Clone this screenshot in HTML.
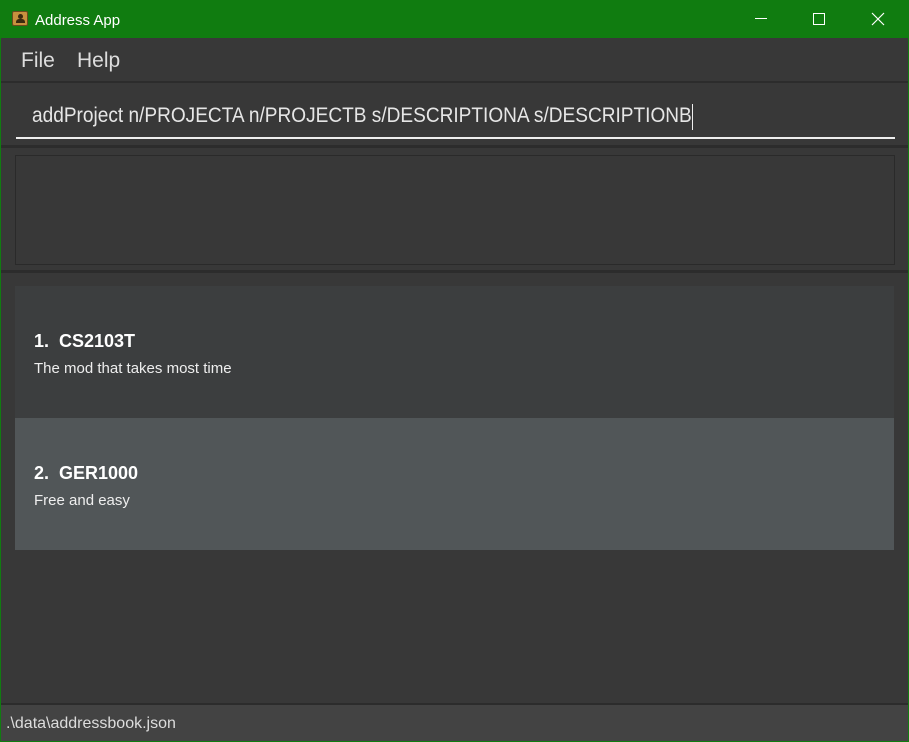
<!DOCTYPE html>
<html><head><style>
*{margin:0;padding:0;box-sizing:border-box}
body{width:909px;height:742px;background:#107c10;font-family:"Segoe UI","Liberation Sans",sans-serif;position:relative;overflow:hidden}
.abs{position:absolute}
</style></head><body>
<div class="abs" style="left:0;top:0;width:909px;height:38px;background:#107c10"></div>
<div class="abs" style="left:12px;top:11px;width:16px;height:15px;background:#c8913e;border:1px solid #6b4a1e;border-radius:2px"><div style="position:absolute;left:5px;top:2px;width:5px;height:5px;background:#3a2a10;border-radius:50%"></div><div style="position:absolute;left:3px;top:7px;width:9px;height:4px;background:#3a2a10;border-radius:3px 3px 0 0"></div></div>
<div class="abs" style="left:35px;top:12px;color:#fff;font-size:15px">Address App</div>
<div class="abs" style="left:755px;top:18px;width:12px;height:1px;background:#fff"></div>
<div class="abs" style="left:813px;top:13px;width:12px;height:12px;border:1px solid #fff"></div>
<svg class="abs" style="left:871px;top:12px" width="14" height="14"><path d="M1 1L13 13M13 1L1 13" stroke="#fff" stroke-width="1.2"/></svg>
<div class="abs" style="left:1px;top:38px;width:907px;height:703px;background:#383838"></div>
<div class="abs" style="left:21px;top:49px;color:#ddd;font-size:21px">File</div>
<div class="abs" style="left:77px;top:49px;color:#ddd;font-size:21px">Help</div>
<div class="abs" style="left:1px;top:81px;width:907px;height:2px;background:#2c2c2c"></div>
<div class="abs" style="left:32px;top:104px;color:#e6e6e6;font-size:21px;white-space:nowrap;transform:scaleX(0.908);transform-origin:0 0">addProject n/PROJECTA n/PROJECTB s/DESCRIPTIONA s/DESCRIPTIONB</div>
<div class="abs" style="left:692px;top:104px;width:1px;height:26px;background:#eee"></div>
<div class="abs" style="left:16px;top:137px;width:879px;height:2px;background:#eee"></div>
<div class="abs" style="left:1px;top:145px;width:907px;height:3px;background:#2c2c2c"></div>
<div class="abs" style="left:15px;top:155px;width:880px;height:110px;border:1px solid #2a2a2a"></div>
<div class="abs" style="left:1px;top:270px;width:907px;height:3px;background:#2c2c2c"></div>
<div class="abs" style="left:15px;top:286px;width:879px;height:132px;background:#3c3e3f"></div>
<div class="abs" style="left:34px;top:331px;color:#fff;font-size:18px;font-weight:bold">1.&nbsp; CS2103T</div>
<div class="abs" style="left:34px;top:360px;color:#eee;font-size:15px">The mod that takes most time</div>
<div class="abs" style="left:15px;top:418px;width:879px;height:132px;background:#515658"></div>
<div class="abs" style="left:34px;top:463px;color:#fff;font-size:18px;font-weight:bold">2.&nbsp; GER1000</div>
<div class="abs" style="left:34px;top:492px;color:#eee;font-size:15px">Free and easy</div>
<div class="abs" style="left:1px;top:703px;width:907px;height:2px;background:#2c2c2c"></div>
<div class="abs" style="left:1px;top:705px;width:907px;height:36px;background:#434343"></div>
<div class="abs" style="left:6px;top:715px;color:#ddd;font-size:16px">.\data\addressbook.json</div>
</body></html>
